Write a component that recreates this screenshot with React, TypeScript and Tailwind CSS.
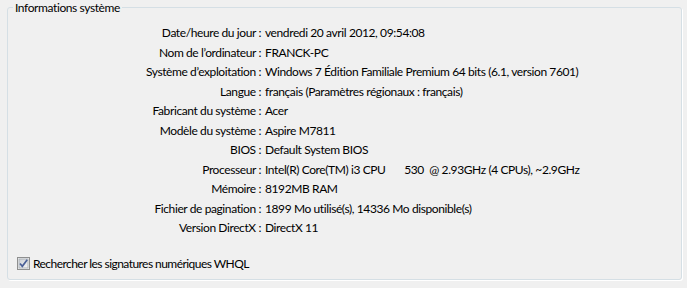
const rows: [string, string][] = [
  ["Date/heure du jour :", "vendredi 20 avril 2012, 09:54:08"],
  ["Nom de l’ordinateur :", "FRANCK-PC"],
  ["Système d’exploitation :", "Windows 7 Édition Familiale Premium 64 bits (6.1, version 7601)"],
  ["Langue :", "français (Paramètres régionaux : français)"],
  ["Fabricant du système :", "Acer"],
  ["Modèle du système :", "Aspire M7811"],
  ["BIOS :", "Default System BIOS"],
  ["Processeur :", "Intel(R) Core(TM) i3 CPU       530  @ 2.93GHz (4 CPUs), ~2.9GHz"],
  ["Mémoire :", "8192MB RAM"],
  ["Fichier de pagination :", "1899 Mo utilisé(s), 14336 Mo disponible(s)"],
  ["Version DirectX :", "DirectX 11"],
];

function CheckBox() {
  return (
    <svg width="13" height="13" viewBox="0 0 13 13" className="shrink-0">
      <defs>
        <linearGradient id="cbg" x1="0" y1="0" x2="1" y2="1">
          <stop offset="0" stopColor="#cbcfd5" />
          <stop offset="1" stopColor="#f6f6f6" />
        </linearGradient>
      </defs>
      <rect x="0.5" y="0.5" width="12" height="12" fill="#f4f4f4" stroke="#8e8f8f" />
      <rect x="2" y="2" width="9" height="9" fill="url(#cbg)" stroke="#aeb3b9" strokeWidth="1" />
      <path d="M3 6.5 L5.3 9.3 L10.2 2.8" fill="none" stroke="#4a5f97" strokeWidth="1.7" />
    </svg>
  );
}

export default function App() {
  return (
    <div className="w-[687px] h-[288px] bg-[#f0f0f0] text-[12px] text-black font-['Lato','Noto_Sans',sans-serif] leading-[15px] tracking-[-0.4px]">
      <fieldset className="ml-[7px] w-[675px] h-[280px] border border-[#d5dfe5] rounded-[3px] shadow-[1px_1px_0_#ffffff]">
        <legend className="ml-[5px] px-[2px]">Informations système</legend>
        <div className="grid grid-cols-[253px_1fr] gap-x-[4px] pt-[8px]">
          {rows.map(([label, value], i) => (
            <div key={i} className="contents">
              <div className="h-[19.5px] flex items-center justify-end">{label}</div>
              <div className="h-[19.5px] flex items-center whitespace-pre">{value}</div>
            </div>
          ))}
        </div>
        <div className="flex items-center gap-[3px] pl-[9px] mt-[18px]">
          <CheckBox />
          <span className="tracking-[-0.55px]">Rechercher les signatures numériques WHQL</span>
        </div>
      </fieldset>
    </div>
  );
}
